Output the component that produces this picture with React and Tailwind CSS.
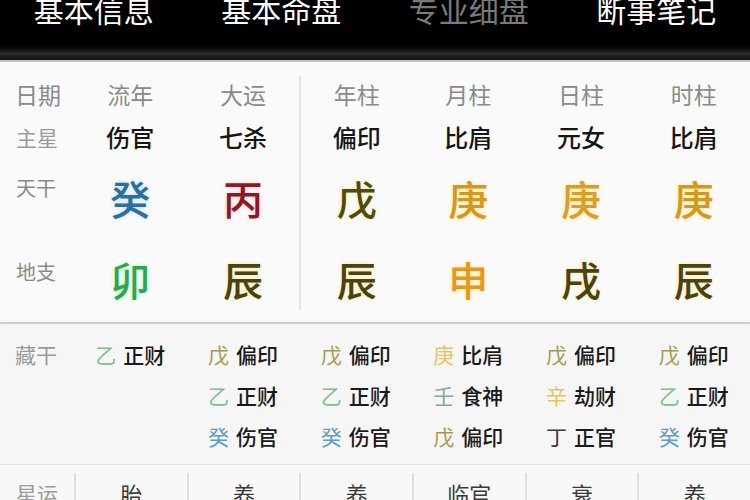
import React from "react";

const tabs = [
  { t: "基本信息", c: "text-white" },
  { t: "基本命盘", c: "text-white" },
  { t: "专业细盘", c: "text-[#7a7a7a]" },
  { t: "断事笔记", c: "text-white" },
];

const cols = [
  {
    head: "流年",
    star: "伤官",
    gan: { ch: "癸", c: "text-[#2d6f9c] [text-shadow:0_0_4px_#b9def5]" },
    zhi: { ch: "卯", c: "text-[#2fa64c] [text-shadow:0_0_4px_#b4f0bf]" },
    hidden: [{ s: "乙", c: "text-[#7cbf8e]", g: "正财" }],
    yun: "胎",
  },
  {
    head: "大运",
    star: "七杀",
    gan: { ch: "丙", c: "text-[#8a1b24] [text-shadow:0_0_4px_#f3c4c8]" },
    zhi: { ch: "辰", c: "text-[#4a4210] [text-shadow:0_0_4px_#f6eba0]" },
    hidden: [
      { s: "戊", c: "text-[#a59a55]", g: "偏印" },
      { s: "乙", c: "text-[#7cbf8e]", g: "正财" },
      { s: "癸", c: "text-[#5f9cc4]", g: "伤官" },
    ],
    yun: "养",
  },
  {
    head: "年柱",
    star: "偏印",
    gan: { ch: "戊", c: "text-[#4f4a0e] [text-shadow:0_0_4px_#f6eba0]" },
    zhi: { ch: "辰", c: "text-[#4a4210] [text-shadow:0_0_4px_#f6eba0]" },
    hidden: [
      { s: "戊", c: "text-[#a59a55]", g: "偏印" },
      { s: "乙", c: "text-[#7cbf8e]", g: "正财" },
      { s: "癸", c: "text-[#5f9cc4]", g: "伤官" },
    ],
    yun: "养",
    div: true,
  },
  {
    head: "月柱",
    star: "比肩",
    gan: { ch: "庚", c: "text-[#d09a22] [text-shadow:0_0_4px_#ffe390]" },
    zhi: { ch: "申", c: "text-[#e29a1e] [text-shadow:0_0_4px_#ffe390]" },
    hidden: [
      { s: "庚", c: "text-[#e5c36a]", g: "比肩" },
      { s: "壬", c: "text-[#86a7a7]", g: "食神" },
      { s: "戊", c: "text-[#a59a55]", g: "偏印" },
    ],
    yun: "临官",
  },
  {
    head: "日柱",
    star: "元女",
    gan: { ch: "庚", c: "text-[#d99d28] [text-shadow:0_0_4px_#ffe390]" },
    zhi: { ch: "戌", c: "text-[#4a4210] [text-shadow:0_0_4px_#f6eba0]" },
    hidden: [
      { s: "戊", c: "text-[#a59a55]", g: "偏印" },
      { s: "辛", c: "text-[#e7c45a]", g: "劫财" },
      { s: "丁", c: "text-[#3a3a3a]", g: "正官" },
    ],
    yun: "衰",
  },
  {
    head: "时柱",
    star: "比肩",
    gan: { ch: "庚", c: "text-[#d09a22] [text-shadow:0_0_4px_#ffe390]" },
    zhi: { ch: "辰", c: "text-[#4a4210] [text-shadow:0_0_4px_#f6eba0]" },
    hidden: [
      { s: "戊", c: "text-[#a59a55]", g: "偏印" },
      { s: "乙", c: "text-[#7cbf8e]", g: "正财" },
      { s: "癸", c: "text-[#5f9cc4]", g: "伤官" },
    ],
    yun: "养",
  },
];

export default function App() {
  return (
    <div className="w-[750px] h-[500px] overflow-hidden bg-[#f8f8f8] font-['Noto_Sans_CJK_SC','Noto_Sans',sans-serif]">
      {/* Top tab bar */}
      <div className="flex h-[47px] bg-black">
        {tabs.map((t) => (
          <div key={t.t} className="flex-1 flex justify-center">
            <span className={`mt-[-6px] text-[30px] leading-[30px] ${t.c}`}>{t.t}</span>
          </div>
        ))}
      </div>
      <div className="h-[13px] bg-linear-to-b from-[#050505] via-[#2b2b2b] to-[#121212]" />
      <div className="h-[2px] bg-[#c4c4c4]" />

      {/* Upper grid */}
      <div className="pt-[14px] pb-[12px] bg-[#fafafa]">
        <div className="grid grid-cols-[74px_repeat(6,1fr)]">
          {/* Row 1 */}
          <div className="h-[36px] flex items-center pl-[15px] text-[23px] leading-[24px] text-[#8a8a8a]">日期</div>
          {cols.map((c) => (
            <div
              key={"h" + c.head}
              className={`h-[36px] flex items-center justify-center text-[23px] leading-[24px] text-[#8a8a8a] ${c.div ? "border-l-2 border-[#e6e6e6]" : ""}`}
            >
              {c.head}
            </div>
          ))}
          {/* Row 2 */}
          <div className="h-[50px] flex items-center pl-[16px] text-[21px] leading-[24px] text-[#9a9a9a]">主星</div>
          {cols.map((c) => (
            <div
              key={"s" + c.head}
              className={`h-[50px] flex items-center justify-center text-[24px] leading-[24px] font-medium text-[#151515] ${c.div ? "border-l-2 border-[#e6e6e6]" : ""}`}
            >
              {c.star}
            </div>
          ))}
          {/* Row 3 */}
          <div className="h-[80px] pt-[14px] pl-[16px] text-[20px] leading-[24px] text-[#8a8a8a]">天干</div>
          {cols.map((c) => (
            <div
              key={"g" + c.head}
              className={`h-[80px] pt-[16px] flex justify-center ${c.div ? "border-l-2 border-[#e6e6e6]" : ""}`}
            >
              <span className={`text-[40px] leading-[40px] font-medium ${c.gan.c}`}>{c.gan.ch}</span>
            </div>
          ))}
          {/* Row 4 */}
          <div className="h-[68px] pt-[18px] pl-[16px] text-[20px] leading-[24px] text-[#8a8a8a]">地支</div>
          {cols.map((c) => (
            <div
              key={"z" + c.head}
              className={`h-[68px] pt-[17px] flex justify-center ${c.div ? "border-l-2 border-[#e6e6e6]" : ""}`}
            >
              <span className={`text-[40px] leading-[40px] font-medium ${c.zhi.c}`}>{c.zhi.ch}</span>
            </div>
          ))}
        </div>
      </div>

      {/* Separator */}
      <div className="h-[2px] bg-[#cfcfcf] shadow-[0_2px_4px_rgba(0,0,0,0.18)]" />

      {/* Hidden stems */}
      <div className="pt-[9px] pb-[8px] bg-[#f6f6f6] grid grid-cols-[74px_repeat(6,1fr)]">
        <div className="h-[41px] flex items-center pl-[15px] text-[21px] leading-[24px] text-[#9a9a9a]">藏干</div>
        {cols.map((c) => (
          <div key={"hd" + c.head} className="flex flex-col items-center">
            {c.hidden.map((h, i) => (
              <div key={i} className="h-[41px] flex items-center gap-[7px] text-[21px] leading-[24px]">
                <span className={h.c}>{h.s}</span>
                <span className="font-medium text-[#1a1a1a]">{h.g}</span>
              </div>
            ))}
          </div>
        ))}
      </div>

      {/* Star fortune row */}
      <div className="border-t border-[#e3e3e3] bg-[#f8f8f8] grid grid-cols-[74px_repeat(6,1fr)]">
        <div className="pt-[17px] pl-[16px] text-[21px] leading-[22px] text-[#9a9a9a]">星运</div>
        {cols.map((c) => (
          <div key={"y" + c.head} className="mt-[8px] h-[40px] border-l-2 border-[#e0e0e0] flex justify-center pt-[9px]">
            <span className="text-[22px] leading-[22px] text-[#3a3a3a]">{c.yun}</span>
          </div>
        ))}
      </div>
    </div>
  );
}
